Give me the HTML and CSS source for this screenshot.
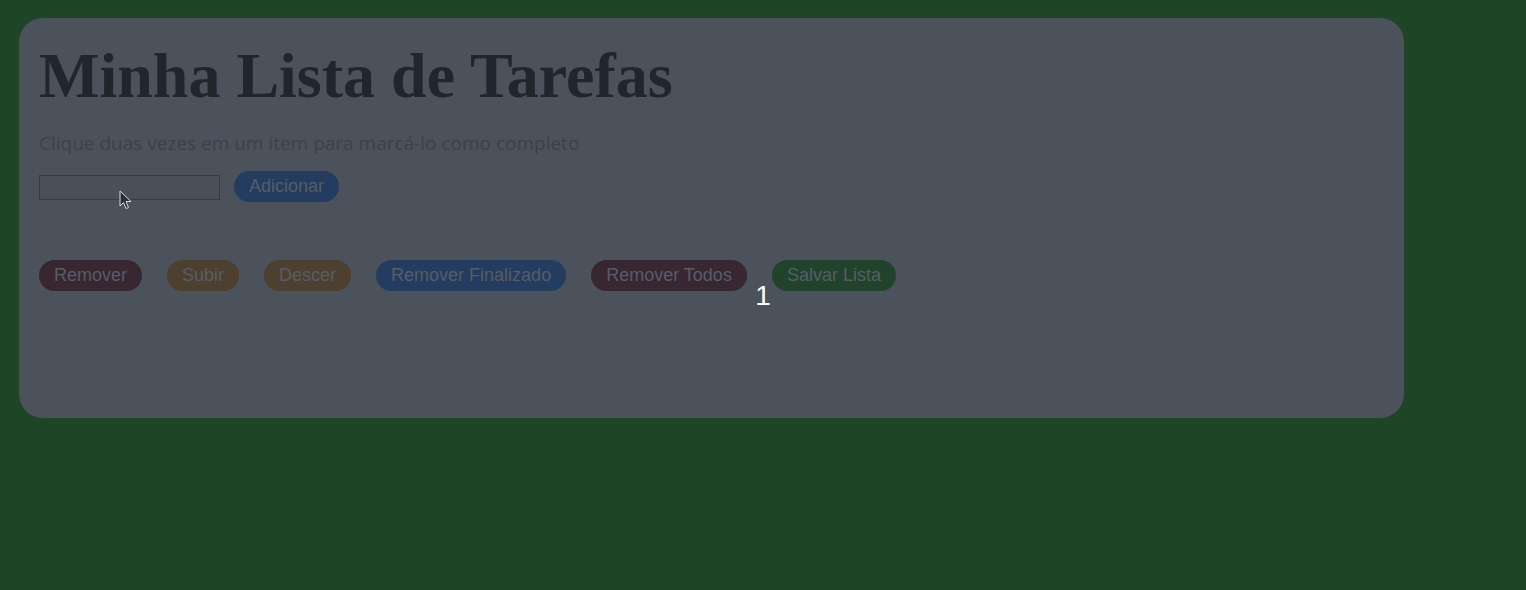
FILE: index.html
```html
<!DOCTYPE html>
<html lang="pt">
<head>
<meta charset="utf-8">
<title>Minha Lista de Tarefas</title>
<link rel="stylesheet" href="styles.css">
</head>
<body>
<main class="card">
  <h1 class="title">Minha Lista de Tarefas</h1>
  <p class="hint">Clique duas vezes em um item para marcá-lo como completo</p>
  <div class="add-row">
    <input class="task-input" type="text">
    <button class="btn btn-blue">Adicionar</button>
  </div>
  <ul class="list"></ul>
  <div class="actions">
    <button class="btn btn-red">Remover</button>
    <button class="btn btn-brown">Subir</button>
    <button class="btn btn-brown">Descer</button>
    <button class="btn btn-blue">Remover Finalizado</button>
    <span class="badge-wrap">
      <button class="btn btn-red">Remover Todos</button>
      <span class="count">1</span>
    </span>
    <button class="btn btn-green">Salvar Lista</button>
  </div>
  <svg class="cursor" width="14" height="20" viewBox="0 0 14 20" aria-hidden="true">
    <path d="M1 1 L1 16 L4.5 12.5 L7 18.5 L9.5 17.5 L7 11.5 L12 11.5 Z" fill="#2a2f35" stroke="#d8dadc" stroke-width="1"/>
  </svg>
</main>
</body>
</html>
```

FILE: styles.css
```css
html, body {
  margin: 0;
  padding: 0;
}
body {
  background: #1f4529;
  padding: 18px 19px;
  min-height: 590px;
  box-sizing: border-box;
}
.card {
  position: relative;
  width: 1385px;
  height: 400px;
  box-sizing: border-box;
  background: #4b525b;
  border-radius: 24px;
  padding: 20px;
}
.title {
  margin: 2px 0 0 0;
  font-family: "Liberation Serif", serif;
  font-weight: bold;
  font-size: 64px;
  line-height: 71px;
  color: #21262d;
}
.hint {
  margin: 19px 0 0 0;
  font-family: "Open Sans", sans-serif;
  font-size: 19px;
  line-height: 26px;
  color: #3c424a;
}
.add-row {
  display: flex;
  align-items: center;
  gap: 14px;
  margin-top: 15px;
}
.task-input {
  width: 181px;
  height: 25px;
  box-sizing: border-box;
  margin: 2px 0 0 0;
  background: #4a5058;
  border: 1px solid #363c43;
  padding: 0 4px;
}
.list {
  margin: 0;
  padding: 0;
  list-style: none;
  height: 58px;
}
.actions {
  display: flex;
  align-items: flex-start;
  gap: 25px;
}
.btn {
  font-family: "Liberation Sans", Arial, sans-serif;
  font-size: 18px;
  line-height: 31px;
  height: 31px;
  padding: 0 15px;
  border: none;
  border-radius: 16px;
  color: #565d66;
  margin: 0;
  cursor: pointer;
}
.btn-blue { background: #233c60; }
.btn-red { background: #382731; }
.btn-brown { background: #4e4030; }
.btn-green { background: #22432b; }
.badge-wrap {
  position: relative;
  display: inline-block;
}
.count {
  position: absolute;
  left: 164px;
  top: 20px;
  font-family: "Liberation Sans", Arial, sans-serif;
  font-size: 28px;
  line-height: 32px;
  color: #ffffff;
}
.cursor {
  position: absolute;
  left: 100px;
  top: 172px;
}
```
